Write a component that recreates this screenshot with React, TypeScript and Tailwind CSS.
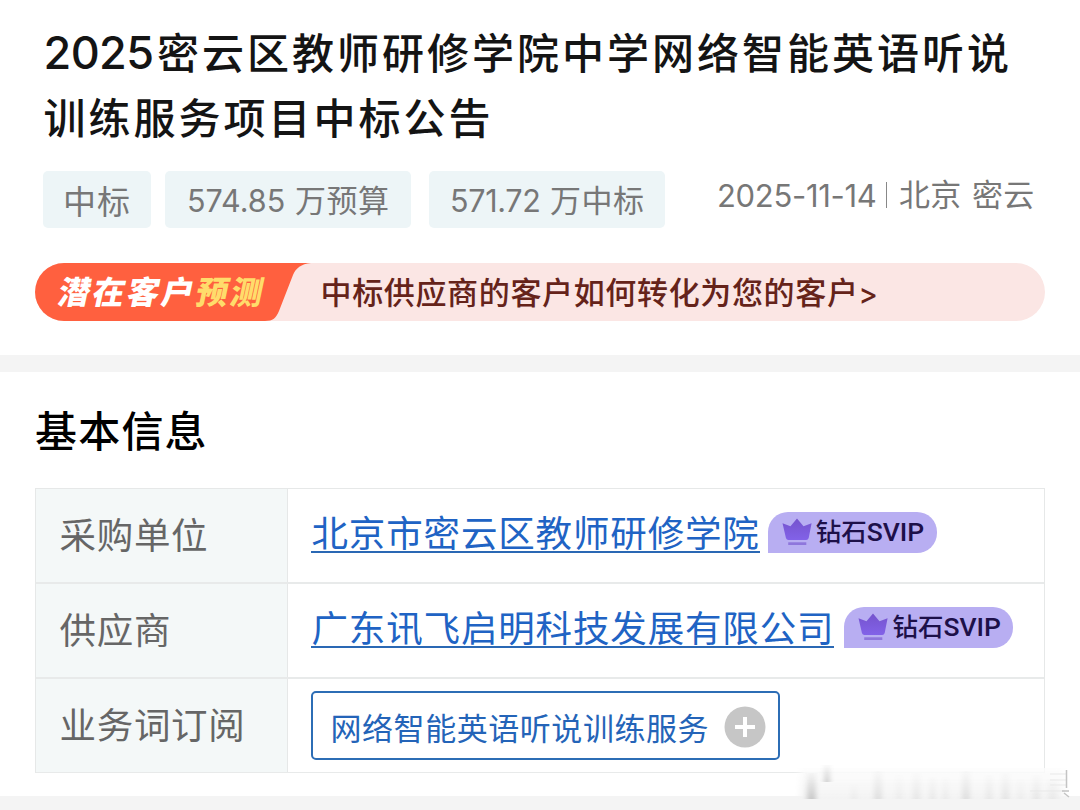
import type { ReactNode } from "react";

const Num = ({ children, className }: { children: ReactNode; className: string }) => (
  <span className={`font-[Inter] ${className}`}>{children}</span>
);

const SvipBadge = () => (
  <span className="flex h-[40.5px] w-[169px] shrink-0 items-center rounded-[20px] rounded-bl-none bg-[#b8aef2] pl-[14px] text-[#1d1049]">
    <svg viewBox="0 0 29 28" className="mb-px h-7 w-[30px]" preserveAspectRatio="none">
      <defs>
        <linearGradient id="crown" x1="0" y1="0" x2="0" y2="1">
          <stop offset="0" stopColor="#7553cd" />
          <stop offset="1" stopColor="#8262e8" />
        </linearGradient>
      </defs>
      <path
        d="M0.5 5.2L8.2 8.2L14.5 0.5L20.8 8.2L28.6 5.2L25.8 20Q25.2 22 23.4 22H6.2Q4.4 22 3.8 20Z"
        fill="url(#crown)"
      />
      <rect x="6" y="24.3" width="17.5" height="2.7" fill="#8e76dc" />
    </svg>
    <span className="mb-[2px] ml-[4px] whitespace-nowrap text-[25.5px] leading-[38px] font-medium">
      钻石<span className="font-[Roboto] text-[26.5px]">SVIP</span>
    </span>
  </span>
);

const CompanyLink = ({ children }: { children: ReactNode }) => (
  <a className="mr-2 h-[41px] shrink-0 border-b-2 border-[#2a68b4] pl-[0.5px] text-[36.5px] leading-[40px] tracking-[0.85px] whitespace-nowrap text-[#2063c4]">
    {children}
  </a>
);

const InfoRow = ({ label, children }: { label: string; children: ReactNode }) => (
  <div className="flex h-[95px] border-b-2 border-[#e8eaea] last:h-[94px] last:border-b">
    <div className="w-[252px] border-r border-[#e6e8e8] bg-[#f4f8f8] pl-[23.5px] text-[36.5px] leading-[90px] tracking-[0.7px] text-[#666]">
      {label}
    </div>
    <div className="flex flex-1 pl-[23px]">{children}</div>
  </div>
);

// x position, width, height and opacity of the faded streaks
const streaks = [
  [807, 9, 26, 0.17],
  [824, 6, 17, 0.16],
  [851, 6, 15, 0.03],
  [874, 8, 28, 0.08],
  [896, 6, 24, 0.03],
  [913, 7, 26, 0.05],
  [930, 5, 22, 0.05],
  [943, 5, 22, 0.04],
  [962, 8, 28, 0.08],
  [986, 6, 24, 0.05],
  [1002, 7, 26, 0.06],
  [1018, 5, 20, 0.03],
  [1033, 7, 24, 0.05],
  [1048, 9, 20, 0.04],
];

const Watermark = () => (
  <svg viewBox="790 760 290 50" className="absolute right-0 bottom-0 h-[50px] w-[290px]">
    <defs>
      <linearGradient id="fade" x1="0" y1="0" x2="0" y2="1">
        <stop offset="0" stopColor="#777" stopOpacity="0.15" />
        <stop offset="1" stopColor="#777" />
      </linearGradient>
      <linearGradient id="haze" x1="0" y1="0" x2="0" y2="1">
        <stop offset="0" stopColor="#fdfdfd" stopOpacity="0.8" />
        <stop offset="1" stopColor="#f3f3f3" />
      </linearGradient>
      <filter id="soft" x="-80%" y="-10%" width="260%" height="120%">
        <feGaussianBlur stdDeviation="2.4 0.7" />
      </filter>
      <filter id="edge" x="-5%" y="-10%" width="110%" height="120%">
        <feGaussianBlur stdDeviation="3 0.5" />
      </filter>
    </defs>
    <rect x="800" y="768" width="264" height="31" fill="url(#haze)" filter="url(#edge)" />
    {streaks.map(([x, w, h, o]) => (
      <rect
        key={x}
        x={x}
        y={x === 824 ? 765 : 799 - h}
        width={w}
        height={h}
        fill="url(#fade)"
        opacity={o * 2}
        filter="url(#soft)"
      />
    ))}
    <path d="M1030 791H1064M1050 774H1067M1050 780H1066M1050 785H1066" stroke="#e9e9e9" strokeWidth="1" />
    <path d="M1066.5 770V788M1062 791H1069M1064 793L1069 797" stroke="#c4c4c4" strokeWidth="1.5" fill="none" />
  </svg>
);

export default function App() {
  return (
    <div className="relative h-[810px] w-[1080px] overflow-hidden bg-white font-['Noto_Sans_CJK_SC',sans-serif]">
      <header className="h-[355px] pt-[18px]">
        <h1 className="pl-[43.5px] text-[42px] leading-[65px] font-medium tracking-[3px] whitespace-nowrap text-[#141414]">
          <div className="flex h-[65px]">
            <Num className="w-[113.5px] pt-[2px] text-[45px] tracking-[-0.6px]">2025</Num>
            密云区教师研修学院中学网络智能英语听说
          </div>
          <div className="h-[65px]">训练服务项目中标公告</div>
        </h1>

        {/* Tags and publish info */}
        <div className="mt-[23px] flex h-[57px] pl-[43px] text-[31px] leading-[55px] whitespace-nowrap text-[#777]">
          <div className="w-[108px] rounded-[5px] bg-[#edf5f7] pt-[2px] pl-[20px] text-[33px] tracking-[1px]">中标</div>
          <div className="ml-[14px] flex w-[246px] rounded-[5px] bg-[#edf5f7] pl-[22px] tracking-[0.5px]">
            <Num className="w-[108px] pt-[2px] text-[30.5px] tracking-[0px]">574.85</Num>万预算
          </div>
          <div className="ml-[18px] flex w-[236px] rounded-[5px] bg-[#edf5f7] pl-[21px] tracking-[0.5px]">
            <Num className="w-[100px] pt-[2px] text-[30.5px] tracking-[-0.3px]">571.72</Num>万中标
          </div>
          <div className="ml-[52px] flex leading-[44px]">
            <Num className="w-[169px] pt-[3px] text-[31px] tracking-[-0.3px]">2025-11-14</Num>
            <span className="mt-[11px] h-[26px] w-px bg-[#888]" />
            <span className="ml-[12px] w-[73px] tracking-[0.2px]">北京</span>
            <span className="tracking-[0.2px]">密云</span>
          </div>
        </div>

        {/* Promo banner */}
        <div className="mt-[35px] ml-[35px] flex h-[58px] w-[1010px] overflow-hidden rounded-full bg-[#fbe6e4]">
          <div className="relative w-[278px]">
            <svg viewBox="0 0 278 58" className="absolute inset-0 h-full w-full">
              <path d="M0 0H276C266 1 261 5 258 12L244 48C241 55 238 58 230 58H0Z" fill="#ff603f" />
            </svg>
            <span className="relative ml-[24px] inline-block -skew-x-12 text-[32px] leading-[55px] font-black tracking-[2.5px] whitespace-nowrap text-white">
              潜在客户<span className="text-[#ffdc6b]">预测</span>
            </span>
          </div>
          <div className="ml-[7.5px] text-[31px] leading-[55px] font-medium tracking-[0.65px] whitespace-nowrap text-[#65231a]">
            中标供应商的客户如何转化为您的客户<span className="font-[Inter] text-[29px]">&gt;</span>
          </div>
        </div>
      </header>

      <div className="h-[17px] bg-[#f4f4f4]" />

      <main className="h-[424px] px-[35px] pt-[25px]">
        <h2 className="h-[91px] text-[42px] leading-[63px] font-medium tracking-[1.2px] text-black">基本信息</h2>
        <div className="border border-b-0 border-[#e6e8e8]">
          <InfoRow label="采购单位">
            <div className="flex pt-[23px]">
              <CompanyLink>北京市密云区教师研修学院</CompanyLink>
              <SvipBadge />
            </div>
          </InfoRow>
          <InfoRow label="供应商">
            <div className="flex pt-[23px]">
              <CompanyLink>广东讯飞启明科技发展有限公司</CompanyLink>
              <span className="ml-[2px]">
                <SvipBadge />
              </span>
            </div>
          </InfoRow>
          <InfoRow label="业务词订阅">
            <div className="mt-[12px] flex h-[69px] w-[469px] items-center rounded-[5px] border-2 border-[#2c6db5] pl-[17.5px]">
              <span className="w-[393px] pt-[2px] text-[31px] leading-[65px] tracking-[0.55px] whitespace-nowrap text-[#2464b8]">
                网络智能英语听说训练服务
              </span>
              <svg viewBox="0 0 42 42" className="mt-[2px] h-[42px] w-[42px]">
                <circle cx="21" cy="21" r="20.5" fill="#c6c6c6" />
                <path d="M21 11V31M11 21H31" stroke="#fff" strokeWidth="4" />
              </svg>
            </div>
          </InfoRow>
        </div>
      </main>

      <footer className="h-[14px] bg-[#f4f4f4]" />
      <Watermark />
    </div>
  );
}
